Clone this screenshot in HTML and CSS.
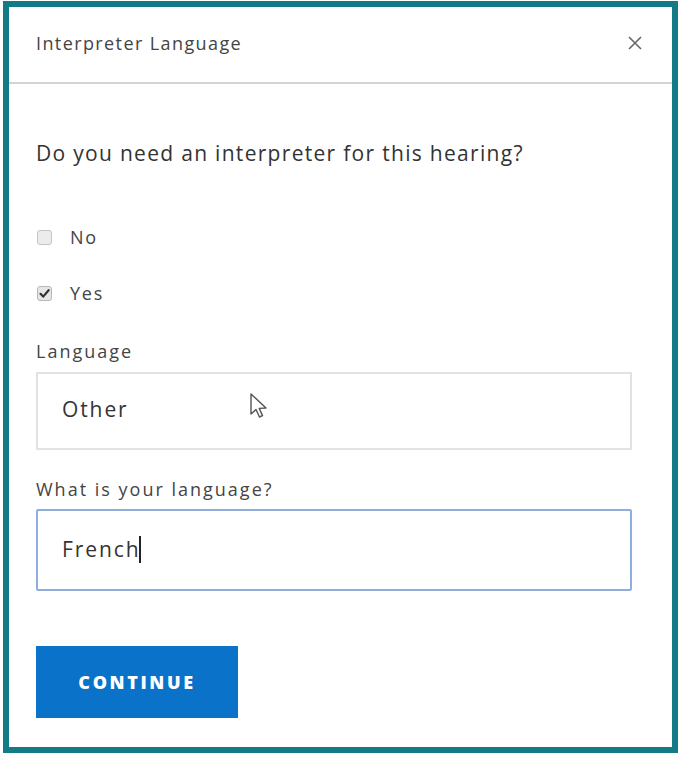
FILE: index.html
```html
<!DOCTYPE html>
<html>
<head>
<meta charset="utf-8">
<link rel="stylesheet" href="styles.css">
</head>
<body>
<div class="frame">
  <div class="header">
    <span class="title">Interpreter Language</span>
    <svg class="close" width="16" height="16" viewBox="0 0 16 16"><path d="M2 2 L14 14 M14 2 L2 14" stroke="#666" stroke-width="1.6" fill="none"/></svg>
  </div>
  <div class="content">
    <div class="question">Do you need an interpreter for this hearing?</div>
    <div class="option opt-no"><span class="box"></span><span class="opt-label">No</span></div>
    <div class="option opt-yes"><span class="box checked"><svg width="13" height="13" viewBox="0 0 13 13"><path d="M2.5 6.8 L5.2 9.6 L10.6 3.2" stroke="#333" stroke-width="2.2" fill="none" stroke-linecap="round" stroke-linejoin="round"/></svg></span><span class="opt-label">Yes</span></div>
    <div class="label lang-label">Language</div>
    <div class="field select">
      <span class="value">Other</span>
      <svg class="pointer" width="22" height="30" viewBox="0 0 22 30"><path d="M2 2 L2 22 L7 17.5 L10.5 25 L13.5 23.6 L10.2 16.4 L17 16 Z" fill="#fff" stroke="#555" stroke-width="1.4" stroke-linejoin="round"/></svg>
    </div>
    <div class="label what-label">What is your language?</div>
    <div class="field input">
      <span class="value">French</span><span class="caret"></span>
    </div>
    <button class="continue">CONTINUE</button>
  </div>
</div>
</body>
</html>
```
FILE: styles.css
```css
* { box-sizing: border-box; }
html, body { margin: 0; padding: 0; background: #fff; }
body { font-family: "Open Sans", Arial, sans-serif; color: #333; }
.frame {
  margin: 1px 0 0 3px;
  width: 675px;
  height: 752px;
  border: 6px solid #127b86;
  background: #fff;
}
.header {
  height: 77px;
  border-bottom: 2px solid #d4d4d4;
  display: flex;
  align-items: center;
  justify-content: space-between;
  padding: 0 27px 4px 27px;
}
.title { font-size: 18px; color: #444; letter-spacing: 1.4px; }
.close { margin-right: 2px; }
.content { padding: 0 40px 0 27px; }
.question { margin-top: 56px; font-size: 21px; line-height: 26px; color: #333; letter-spacing: 1.3px; }
.option { display: flex; align-items: center; height: 24px; }
.opt-no { margin-top: 59px; }
.opt-yes { margin-top: 32px; }
.box {
  width: 15px; height: 15px;
  margin-left: 1px;
  border: 1px solid #c4c4c4;
  border-radius: 3px;
  background: #ececec;
  display: flex; align-items: center; justify-content: center;
}
.box.checked { background: #e6e6e6; border-color: #b8b8b8; }
.opt-label { margin-left: 18px; font-size: 18px; color: #444; letter-spacing: 1.8px; }
.label { font-size: 18px; line-height: 22px; color: #444; letter-spacing: 2px; }
.lang-label { margin-top: 35px; }
.what-label { margin-top: 28px; }
.field {
  position: relative;
  width: 596px;
  display: flex;
  align-items: center;
  padding-left: 24px;
  font-size: 21px;
  color: #333;
  letter-spacing: 1.9px;
}
.select { margin-top: 10px; height: 78px; border: 2px solid #e2e2e2; padding-bottom: 4px; }
.input { margin-top: 9px; height: 82px; border: 2px solid #8eaedb; border-radius: 2px; padding-bottom: 2px; }
.caret { display: inline-block; width: 2px; height: 27px; background: #222; margin-left: -1px; }
.pointer { position: absolute; left: 211px; top: 18px; }
.continue {
  margin-top: 55px;
  width: 202px; height: 72px;
  border: none;
  background: #0a72c8;
  color: #fff;
  font-family: "Open Sans", Arial, sans-serif;
  font-weight: 800;
  font-size: 18px;
  letter-spacing: 2.6px;
  padding: 0;
}
```
